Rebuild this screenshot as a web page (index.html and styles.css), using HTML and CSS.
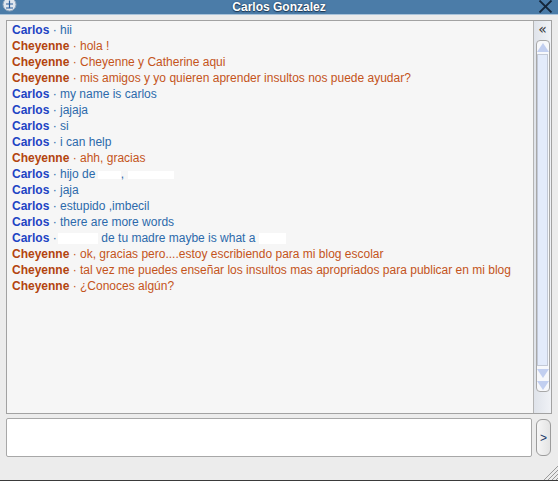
FILE: index.html
```html
<!DOCTYPE html>
<html lang="es">
<head>
<meta charset="utf-8">
<title>Carlos Gonzalez</title>
<link rel="stylesheet" href="styles.css">
</head>
<body>
<div class="window">
  <header class="titlebar">
    <span class="tb-add">
      <svg width="15" height="15" viewBox="0 0 15 15"><circle cx="7.5" cy="7.5" r="6.5" fill="#dfe6ee" stroke="#8fa6bd" stroke-width="1"/><path d="M7.5 3.5v7M4 7h7M4 11h7" stroke="#2a5d9a" stroke-width="1.2"/></svg>
    </span>
    <span class="tb-title">Carlos Gonzalez</span>
    <span class="tb-close">
      <svg width="15" height="13" viewBox="0 0 15 13"><path d="M1.5 0.5l12 12M13.5 0.5l-12 12" stroke="#15263a" stroke-width="1.8"/></svg>
    </span>
  </header>

  <div class="log">
    <div class="messages">
      <div class="msg c"><b>Carlos</b> · hii</div>
      <div class="msg h"><b>Cheyenne</b> · hola !</div>
      <div class="msg h"><b>Cheyenne</b> · Cheyenne y Catherine aqui</div>
      <div class="msg h"><b>Cheyenne</b> · mis amigos y yo quieren aprender insultos nos puede ayudar?</div>
      <div class="msg c"><b>Carlos</b> · my name is carlos</div>
      <div class="msg c"><b>Carlos</b> · jajaja</div>
      <div class="msg c"><b>Carlos</b> · si</div>
      <div class="msg c"><b>Carlos</b> · i can help</div>
      <div class="msg h"><b>Cheyenne</b> · ahh, gracias</div>
      <div class="msg c"><b>Carlos</b> · hijo de <span class="redact r1"></span>, <span class="redact r2"></span></div>
      <div class="msg c"><b>Carlos</b> · jaja</div>
      <div class="msg c"><b>Carlos</b> · estupido ,imbecil</div>
      <div class="msg c"><b>Carlos</b> · there are more words</div>
      <div class="msg c"><b>Carlos</b> · <span class="redact r3"></span> de tu madre maybe is what a <span class="redact r4"></span></div>
      <div class="msg h"><b>Cheyenne</b> · ok, gracias pero....estoy escribiendo para mi blog escolar</div>
      <div class="msg h"><b>Cheyenne</b> · tal vez me puedes enseñar los insultos mas apropriados para publicar en mi blog</div>
      <div class="msg h"><b>Cheyenne</b> · ¿Conoces algún?</div>
    </div>
    <div class="scrollcol">
      <div class="collapse">«</div>
      <div class="track">
        <span class="arrow up"></span>
        <div class="rail"></div>
        <span class="arrow down"></span>
        <span class="arrow down"></span>
      </div>
    </div>
  </div>

  <div class="composer">
    <div class="input"></div>
    <button class="send">&gt;</button>
  </div>

  <span class="grip">
    <svg width="18" height="16" viewBox="0 0 18 16"><path d="M18 2L4 16M18 6L8 16M18 10L12 16M18 14L16 16" stroke="#9a9a9a" stroke-width="1"/></svg>
  </span>
</div>
</body>
</html>
```

FILE: styles.css
```css
* { box-sizing: border-box; }

html, body {
  margin: 0;
  padding: 0;
  background: #ececec;
}

.window {
  position: relative;
  width: 558px;
  height: 481px;
  background: #ececec;
  border-bottom: 1px solid #3a3a3a;
  font-family: "Liberation Sans", Arial, sans-serif;
  display: flex;
  flex-direction: column;
}

.titlebar {
  height: 15px;
  background: #4b7ca8;
  border-bottom: 1px solid #a9c3da;
  display: flex;
  align-items: center;
  justify-content: center;
  position: relative;
  overflow: hidden;
}

.tb-title {
  color: #fff;
  font-weight: bold;
  font-size: 12px;
  line-height: 14px;
  margin-top: -1px;
  text-shadow: 0 1px 1px #1c3550, 0 0 2px #2a4a6a;
}

.tb-add {
  position: absolute;
  left: 2px;
  top: -3px;
  display: flex;
}

.tb-close {
  position: absolute;
  right: 5px;
  top: 0;
  display: flex;
}

.log {
  margin: 5px 6px 0 6px;
  height: 394px;
  border: 1px solid #a2a2a2;
  background: #f6f6f6;
  display: flex;
}

.messages {
  flex: 1;
  padding: 1px 0 0 5px;
  font-size: 12px;
  line-height: 16px;
}

.msg { white-space: nowrap; }
.msg.c { color: #2c6aab; }
.msg.c b { color: #1e44c4; }
.msg.h { color: #c4541b; }
.msg.h b { color: #b3440f; }

.redact {
  display: inline-block;
  background: #ffffff;
  vertical-align: middle;
}
.r1 { width: 23px; height: 8px; margin-left: -1px; }
.r2 { width: 46px; height: 8px; margin-left: 1px; }
.r3 { width: 40px; height: 11px; margin-left: -2px; }
.r4 { width: 27px; height: 11px; }

.scrollcol {
  width: 18px;
  border-left: 1px solid #b4b4b4;
  background: linear-gradient(90deg, #dfe3ea, #f0f2f6);
  display: flex;
  flex-direction: column;
  align-items: center;
}

.collapse {
  font-size: 14px;
  line-height: 13px;
  color: #333;
  margin-top: 2px;
  height: 17px;
  font-family: "DejaVu Sans", sans-serif;
}

.track {
  width: 14px;
  height: 352px;
  border: 1px solid #a8a8a8;
  border-radius: 4px;
  background: #f7f8fb;
  display: flex;
  flex-direction: column;
  align-items: center;
  padding-top: 2px;
}

.rail {
  width: 11px;
  height: 312px;
  margin-top: 2px;
  background: #e3ebfb;
  border: 1px solid #c3c9d6;
}

.arrow {
  width: 0;
  height: 0;
  border-left: 6px solid transparent;
  border-right: 6px solid transparent;
}
.arrow.up { border-bottom: 9px solid #c2cff0; }
.arrow.down { border-top: 9px solid #c2cff0; margin-top: 3px; }

.composer {
  display: flex;
  margin: 4px 6px 0 6px;
  gap: 4px;
}

.input {
  width: 526px;
  height: 39px;
  background: #fff;
  border: 1px solid #a8a8a8;
  border-radius: 2px;
}

.send {
  width: 15px;
  height: 37px;
  margin-top: 1px;
  padding: 0;
  border: 1px solid #9c9c9c;
  border-radius: 6px;
  background: linear-gradient(90deg, #f6f6f6, #e4e4e4);
  font-family: "Liberation Sans", Arial, sans-serif;
  font-size: 12px;
  color: #1b3a6a;
}

.grip {
  position: absolute;
  right: 0;
  bottom: 0;
  display: flex;
}
```
